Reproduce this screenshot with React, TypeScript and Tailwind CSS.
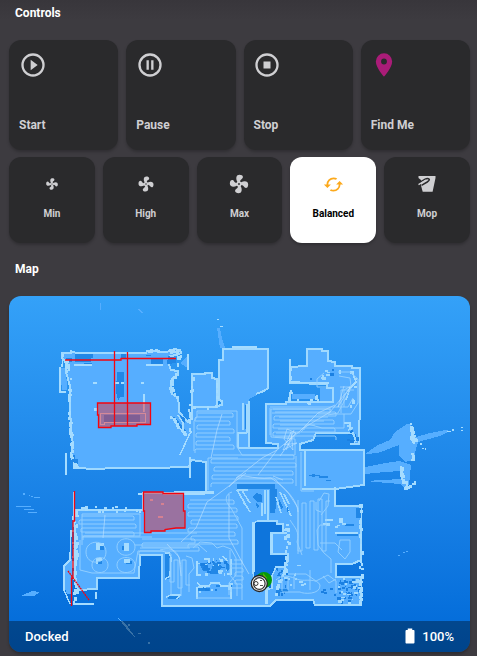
import React from "react";

type Pt = [number, number];

const ICONS = {
  play: "M12,20C7.59,20 4,16.41 4,12C4,7.59 7.59,4 12,4C16.41,4 20,7.59 20,12C20,16.41 16.41,20 12,20M12,2A10,10 0 0,0 2,12A10,10 0 0,0 12,22A10,10 0 0,0 22,12A10,10 0 0,0 12,2M10,16.5L16,12L10,7.5V16.5Z",
  pause: "M13,16V8H15V16H13M9,16V8H11V16H9M12,2A10,10 0 0,1 22,12A10,10 0 0,1 12,22A10,10 0 0,1 2,12A10,10 0 0,1 12,2M12,4A8,8 0 0,0 4,12A8,8 0 0,0 12,20A8,8 0 0,0 20,12A8,8 0 0,0 12,4Z",
  stop: "M12,2A10,10 0 0,0 2,12A10,10 0 0,0 12,22A10,10 0 0,0 22,12A10,10 0 0,0 12,2M12,4C16.41,4 20,7.59 20,12C20,16.41 16.41,20 12,20C7.59,20 4,16.41 4,12C4,7.59 7.59,4 12,4M9,9V15H15V9",
  marker: "M12,11.5A2.5,2.5 0 0,1 9.5,9A2.5,2.5 0 0,1 12,6.5A2.5,2.5 0 0,1 14.5,9A2.5,2.5 0 0,1 12,11.5M12,2A7,7 0 0,0 5,9C5,14.25 12,22 12,22C12,22 19,14.25 19,9A7,7 0 0,0 12,2Z",
  fan: "M12,11A1,1 0 0,0 11,12A1,1 0 0,0 12,13A1,1 0 0,0 13,12A1,1 0 0,0 12,11M12.5,2C17,2 17.11,5.57 14.75,6.75C13.76,7.24 13.32,8.29 13.13,9.22C13.61,9.42 14.03,9.73 14.35,10.13C18.05,8.13 22.03,8.92 22.03,12.5C22.03,17 18.46,17.1 17.28,14.73C16.78,13.74 15.72,13.3 14.79,13.11C14.59,13.59 14.28,14 13.88,14.34C15.87,18.03 15.08,22 11.5,22C7,22 6.91,18.42 9.27,17.24C10.25,16.75 10.69,15.71 10.89,14.79C10.4,14.59 9.97,14.27 9.65,13.87C5.96,15.85 2,15.07 2,11.5C2,7 5.56,6.89 6.74,9.26C7.24,10.25 8.29,10.68 9.22,10.87C9.41,10.39 9.73,9.97 10.14,9.65C8.15,5.96 8.94,2 12.5,2Z",
  cached: "M19,8L15,12H18A6,6 0 0,1 12,18C11,18 10.03,17.75 9.2,17.3L7.74,18.76C8.97,19.54 10.43,20 12,20A8,8 0 0,0 20,12H23M6,12A6,6 0 0,1 12,6C13,6 13.97,6.25 14.8,6.7L16.26,5.24C15.03,4.46 13.57,4 12,4A8,8 0 0,0 4,12H1L5,16L9,12",
  battery: "M16.67,4H15V2H9V4H7.33A1.33,1.33 0 0,0 6,5.33V20.67C6,21.4 6.6,22 7.33,22H16.67A1.33,1.33 0 0,0 18,20.67V5.33C18,4.6 17.4,4 16.67,4Z",
};

function Icon({ name, size, className = "" }: { name: keyof typeof ICONS; size: number; className?: string }) {
  return (
    <svg width={size} height={size} viewBox="0 0 24 24" fill="currentColor" className={`shrink-0 ${className}`}>
      <path d={ICONS[name]} />
    </svg>
  );
}

function MopIcon() {
  return (
    <svg width="20" height="20" viewBox="0 0 20 20" className="shrink-0">
      <path d="M1.500 2H18.500V4L15.600 17.700H5.700L4 11.600V6L1.500 4Z" fill="currentColor" />
      <path d="M1 9.400L8.200 5.100C9.400 4.400 11.200 4.200 12.200 5.200C12.700 6.200 11.300 7.300 10.200 8L4.500 11.300" fill="none" stroke="#2a2a2c" strokeWidth="1.5" />
      <path d="M1.500 10.600L9 6.100" fill="none" stroke="currentColor" strokeWidth="1.3" />
    </svg>
  );
}

/* Deterministic noise for the lidar speckle */
function noise(seed: number) {
  let s = seed * 7919;
  return () => {
    s = (s * 16807) % 2147483647;
    return s / 2147483647;
  };
}

/* Blocky dabs scattered along a wall */
function along(points: Pt[], seed: number, density: number, spread: number) {
  const r = noise(seed);
  let d = "";
  for (let i = 1; i < points.length; i++) {
    const [x0, y0] = points[i - 1];
    const [x1, y1] = points[i];
    const n = Math.ceil(Math.hypot(x1 - x0, y1 - y0) * density);
    for (let k = 0; k < n; k++) {
      const t = r();
      const x = Math.round(x0 + (x1 - x0) * t + (r() - 0.5) * spread) - 1;
      const y = Math.round(y0 + (y1 - y0) * t + (r() - 0.5) * spread) - 1;
      d += `M${x} ${y}h${2 + Math.round(r())}v${2 + Math.round(r() * 2)}H${x}z`;
    }
  }
  return d;
}

/* Speckle inside a rectangle */
function speckle(x: number, y: number, w: number, h: number, n: number, seed: number) {
  const r = noise(seed);
  let d = "";
  for (let i = 0; i < n; i++) {
    const px = Math.round(x + r() * w);
    const py = Math.round(y + r() * h);
    d += `M${px} ${py}h${1 + Math.round(r() * 3)}v${1 + Math.round(r() * 2)}H${px}z`;
  }
  return d;
}

/* Back-and-forth cleaning track */
function snake(x0: number, x1: number, y: number, rows: number, step: number, seed: number) {
  const r = noise(seed);
  let d = `M${x0} ${y}`;
  for (let i = 0; i < rows; i++) {
    const even = i % 2 === 0;
    d += `H${(even ? x1 : x0) + Math.round((r() - 0.5) * 5)}l${even ? 1 : -1} 1v${step - 1}`;
  }
  return d;
}

function snakeV(x: number, y0: number, y1: number, cols: number, step: number, seed: number) {
  const r = noise(seed);
  let d = `M${x} ${y0}`;
  for (let i = 0; i < cols; i++) {
    d += `V${(i % 2 === 0 ? y1 : y0) + Math.round((r() - 0.5) * 6)}h${step}`;
  }
  return d;
}

const poly = (p: Pt[]) => "M" + p.map((q) => q.join(" ")).join("L") + "Z";

const HOUSE: Pt[] = [
  [62, 353], [71, 353], [71, 351], [76, 353], [146, 353], [147, 351], [167, 352], [174, 349], [180, 350], [181, 353], [177, 355], [170, 356],
  [168, 362], [171, 370], [178, 371], [178, 375], [173, 378], [173, 383], [170, 388], [172, 394], [177, 397], [179, 404], [179, 412], [188, 422],
  [192, 418], [192, 374], [205, 374], [205, 373], [212, 373], [212, 378], [217, 379], [217, 406], [222, 405], [222, 401], [219, 400], [219, 360], [223, 360], [223, 349],
  [268, 349], [268, 388], [264, 391], [256, 394], [248, 398], [249, 405], [249, 448], [278, 448], [278, 444], [266, 443],
  [266, 404], [286, 404], [286, 402], [333, 402], [333, 388], [327, 388], [327, 384], [290, 383], [290, 367], [307, 366], [307, 349],
  [322, 349], [322, 351], [328, 351], [328, 361], [335, 362], [335, 366], [352, 366], [352, 368], [360, 368], [360, 396], [359, 444], [350, 444], [356, 441], [353, 433], [333, 433],
  [316, 433], [313, 440], [300, 444], [300, 450], [364, 450], [364, 485], [335, 489], [335, 506], [361, 506], [361, 560], [352, 564], [336, 564], [336, 577],
  [361, 577], [361, 605], [315, 605], [313, 600], [276, 600], [270, 606], [162, 606], [162, 555], [140, 555], [139, 578], [97, 578],
  [97, 589], [78, 590], [75, 575], [75, 541], [74, 510], [143, 510], [143, 493], [206, 492], [206, 462], [191, 460], [189, 467],
  [151, 468], [120, 468], [90, 469], [75, 467], [71, 455], [73, 445], [71, 430], [70, 405], [70, 386], [66, 372], [66, 362], [62, 358],
];

const NOTCH: Pt[] = [
  [253, 523], [258, 521], [277, 521], [277, 524], [283, 524], [283, 532], [287, 533], [271, 533], [271, 554], [288, 554], [288, 561], [284, 567],
  [276, 567], [272, 576], [272, 588], [266, 590], [266, 600], [268, 588], [256, 590], [253, 572],
];

const TRACKS = [
  snake(198, 231, 413, 10, 4, 11),
  snake(275, 334, 412, 7, 4, 27),
  snake(213, 293, 455, 8, 4, 39),
  snake(82, 135, 516, 6, 4, 51),
  snake(190, 235, 500, 12, 4, 67),
  snake(142, 196, 539, 4, 4, 83),
  snakeV(298, 500, 550, 8, 4, 91),
  snakeV(170, 558, 585, 5, 4, 97),
  snake(234, 243, 560, 8, 4, 99),
  "M194 451V421l3-4v-6h40v36l5 8h53v-16l-24-2v-28h60",
  "M208 490V458M208 458H238M296 486V456M301 452V491H314M325 525h-5l-3 5 1 15 6 8 7 6v14",
  "M82 545v-31h58v22H82M86 552c0-13 20-13 20 0s-20 14-20 0M117 547c0-11 18-11 18 0s-18 11-18 0M92 565c0-10 16-10 16 0s-16 10-16 0M117 565c0-10 18-10 18 0s-18 10-18 0",
  "M80 540v30l12 3h42l4-22h24l9 3v42M82 537h70M135 545h64l8 7M140 548h50M85 533h112M160 550c18-5 21 8 21 22v24",
  "M193 548l7-6 12 1 5 5 6-2 8 3 5 9v17l-7 8v12M186 556l6 2 2 10-5 6v18M230 550v25l7 9v12M196 598h35",
  "M232 492c-7 2-8 9-1 16l11 20v72M238 478h36l15 16 9 14v46M290 520c5 8 10 12 7 22l5 13M288 574h18l10 7 12-6 8 6v12",
  "M276 580c8-8 19-1 24 0s17-2 20 5c1 10-17 9-20 7h-18M282 575v16M288 576v14M294 576v13M310 570v20",
  "M319 501l5-8 5 1-1 12-7 9M316 502v8l5 2M340 540h10v12l-5 7-7-7zM320 543h15l7 7M323 576l6 7 7-4",
  "M338 372h12l8 7v24l-7 11H318M339 376l11 2 1 8-7 4v17M354 390h-13v23M270 407h78l5-9M270 435v-27M324 373l-7 6v8h9M351 388l-13 25-10 2",
  "M273 409h57v4h-58M344 414v14h-22l-14-4-7 8M279 417h49M280 421h44M280 425h35M278 429h27M276 433h24M275 437h20",
];

const DEBRIS = [
  "M365 454L378 445L390 440L395 432L407 424H411V437L416 437L430 433L446 430L450 431L440 436L418 442L413 460L405 462L399 456V445L378 453L366 454Z",
  "M365 467L385 463L399 461L411 465L409 485L404 488L400 484L365 481L401 479V471L385 472L365 474Z",
  "M217 328h3L222 338L225 348H220ZM180 363L189 354V369ZM21 596L32 591L40 592L34 596H23ZM290 367H305V382H290ZM292 394H315V399H292ZM320 388H332V402H320Z",
  "M60 368H66L67 390H62ZM65 564L72 559V594H67L63 582ZM100 303h1v7h-1zM138 309h2l3 4h-2zM16 506h15v1H16zM24 509h10v1H24zM28 512h9v1h-9zM23 493h2v2h-2zM28 495l7 2h5v1h-5z",
  "M118 618L130 633L140 641L135 637L126 624ZM138 633h3v1h-3zM148 642h2v2h-2zM128 624h2v2h-2zM398 555h2v1h-2zM403 552h2v1h-2zM406 551h2v1h-2z",
];

const DARK = [
  "M66 358h6v4h-6zM75 354h18v4h-2v4H75zM84 366h8v-3h-8zM117 372h7v25h-4l-2 4-2-11zM116 390h8v4h-8zM104 415h36v7h-36z",
  "M151 359h12v5h-12zM168 356l8 2v5l-9 1zM121 354h5v4h-5zM146 355h5v1h-5zM72 455v10h6v-6h-3v-4z",
  "M173 417l3 1 10 13 1 4h-3zM180 415l5 3v5l-3-2zM237 484h38v5h-38zM270 489h7v10l-2 14h-5zM245 405h3v24h-3z",
  "M199 563h8l2 8h-6zM214 562l8 4-4 8h-8zM225 561l6 6-4 4zM198 588h12v3h-12zM216 585h16v2h-16zM200 586h4v5h-4z",
  "M309 475h11v1h8v2h-9v-2h-10zM326 480h5v1h-5zM337 534h21v2h-21zM165 553h5v26h-5zM168 596h11v3h-11zM312 474h3v3h-3z",
  "M98 546h6v4h-6zM122 546h6v4h-6zM97 561h5v3h-5zM126 561h6v3h-6zM345 524h9v2h-9zM356 508h5v10h-5zM276 589h12v3h-8v4h-4z",
];

const WALLS: { p: Pt[]; s: number; d: number; w: number }[] = [
  { p: [[64, 355], [67, 366], [70, 382], [70, 408], [72, 440], [72, 462], [79, 469]], s: 7, d: 0.4, w: 3 },
  { p: [[146, 352], [180, 350], [178, 370], [172, 378], [173, 395], [178, 397]], s: 13, d: 0.3, w: 3 },
  { p: [[171, 416], [184, 433], [187, 433]], s: 32, d: 0.4, w: 3 },
  { p: [[193, 374], [192, 406], [217, 406], [217, 378]], s: 41, d: 0.12, w: 3 },
  { p: [[191, 400], [190, 432]], s: 44, d: 0.3, w: 3 },
  { p: [[75, 510], [75, 603]], s: 55, d: 0.55, w: 4 },
  { p: [[76, 509], [142, 509]], s: 58, d: 0.25, w: 4 },
  { p: [[361, 503], [361, 604]], s: 63, d: 0.3, w: 3 },
  { p: [[337, 370], [356, 374], [354, 390], [351, 408]], s: 68, d: 0.12, w: 3 },
  { p: [[290, 369], [290, 401], [316, 402], [320, 388]], s: 69, d: 0.14, w: 3 },
  { p: [[286, 524], [288, 550], [286, 568], [276, 593]], s: 77, d: 0.35, w: 4 },
  { p: [[411, 423], [413, 440], [417, 440]], s: 83, d: 1.2, w: 3 },
  { p: [[413, 453], [413, 461]], s: 87, d: 1, w: 2 },
  { p: [[402, 463], [402, 475], [406, 487], [415, 482]], s: 89, d: 0.8, w: 3 },
];

function FloorMap() {
  return (
    <svg viewBox="9 296 461 356" className="absolute inset-0 h-full w-full" shapeRendering="crispEdges" fill="none">
      <path d={DEBRIS.join("")} fill="#56aeff" />
      <path d={poly(HOUSE)} fill="#56aeff" stroke="#9fd9ff" strokeWidth="2" />
      <path d="M256 394L248 398L246 403" stroke="#56aeff" strokeWidth="3" />
      <path d={DARK.join("")} fill="#2187e6" />
      <path d={poly(NOTCH)} fill="#0e75dc" stroke="#9fd9ff" strokeWidth="1.5" />
      <path d="M237 490L250 512M241 489L250 503M237 490H248M265 490V514M268 490V522M276 497L281 513M280 492L291 516M284 494L289 504M262 503V516M244 503L247 507" stroke="#9fd9ff" strokeWidth="1.6" />
      <path d="M252 497l5-4 5 2v7h-4l-3-2zM256 503l4 3-3 2zM279 499l4 8-1 3-3-6zM287 505l2 6-2 1z" fill="#2187e6" />
      <path d="M243 403V430M238 448V433H247M238 448H278M247 404V433M192 407H218M305 451V486M302 489H335M333 387V402H322M300 444V449" stroke="#9fd9ff" strokeWidth="2" />
      <path d="M253 523V572M271 534V553M266 588V604M200 492H214" stroke="#a5dcff" strokeWidth="3" />

      <path
        d={speckle(198, 560, 32, 12, 16, 302) + speckle(337, 578, 22, 23, 40, 303) + speckle(276, 566, 10, 28, 16, 304) + speckle(309, 366, 24, 12, 4, 306) + speckle(347, 425, 10, 16, 9, 307) + speckle(320, 587, 14, 8, 5, 308) + speckle(198, 586, 33, 4, 6, 310)}
        fill="#1b80e2"
      />
      <path
        d={speckle(197, 557, 34, 18, 14, 401) + speckle(337, 577, 23, 25, 24, 402) + speckle(325, 516, 24, 12, 5, 404) + speckle(197, 583, 34, 8, 8, 405) + speckle(278, 564, 26, 20, 13, 407) + speckle(320, 366, 16, 13, 6, 408) + speckle(344, 422, 12, 8, 5, 409)}
        fill="#9fd9ff"
      />
      <path d={WALLS.map((w) => along(w.p, w.s, w.d, w.w)).join("")} fill="#a5dcff" />
      <path
        d="M60 367V392H66M62 367L63 354M66 453V475M188 354V370M290 359V382L329 383M290 392V402M144 394v18M74 365h18M146 365h17M232 347h24v2M74 492V520M71 530L70 560L64 566V590L70 604M75 604H94M96 592V599M138 494H143M163 494H205M335 487V506M335 533H358M197 561v14h4M231 559v15h-4M197 587v12M231 587v12M197 583l4 3h8l2-3h8l2 3h10M204 559h5v4M223 556l4 5M165 553h4l2 5-1 18-5 3M166 597l5-2h9l-3 4M352 372l4 10-6 6-4 12M344 423h6v6M171 416l13 18h3M178 415l5 8v8M190 433l-10 22M190 457V478"
        stroke="#a5dcff"
        strokeWidth="1.5"
      />
      <path d="M93 382h4v2h-4zM115 382h4v2h-4zM121 382h3v2h-3zM141 382h3v2h-3zM94 408h3v3h-3zM96 543h8v3h-4v4h-4zM124 543h5v8h-5zM96 558h6v3h-4v3h-2zM124 559h6v4h-6zM325 519h8v2h-8zM339 518h4v5h-4zM323 523h5v2h-5zM73 462l8 7h-8zM420 443h2v2h-2zM447 431h4v1h-4zM452 429h2v2h-2zM461 427h2v1h-2zM461 430h2v1h-2zM422 448h2v1h-2zM425 448h1v2h-1zM217 319h2v1h-2zM220 326h3v1h-3z" fill="#a5dcff" />

      <g shapeRendering="auto" strokeLinejoin="round">
        <path d={TRACKS.join("")} stroke="#94d0ff" strokeWidth=".95" />
        <path
          d="M335 405L318 413L300 431L277 450L258 475M294 430L288 445L280 456M292 438L286 450M350 388L330 412L302 429M222 414L217 430L211 458M236 478C240 472 252 480 271 478C286 488 297 500 298 512M181 542L196 528L207 502L225 489L246 473M229 494V538L242 562L249 574M167 544L179 557L181 576M105 515L103 538M273 476L283 480M229 487L238 477L262 458L277 450"
          stroke="#b9dfff"
          strokeWidth=".9"
          opacity=".75"
        />
        <path d="M287 429l9 4-12 12 13-2-14 7 8-18 2 18-9-11zM340 387h10l-12 20 6-21" stroke="#c8e7ff" strokeWidth=".7" opacity=".8" />
      </g>

      <path d="M97 403H151V424H137V426H111V427H98V415H97Z" fill="#dd3541" fillOpacity=".5" />
      <path d="M100 413H145V422H104V424H100ZM143 403V412" stroke="#d58998" strokeWidth="1" />
      <path d="M143 492H163V493H184V511H185V528H176L165 530V531H151V532H145V511H143Z" fill="#dd3541" fillOpacity=".5" />
      <path d="M150 499h3v2h-3zM161 503h3v2h-3zM158 516h5v2h-5z" fill="#d58091" />
      <g stroke="#f4050f" strokeWidth="1.3" shapeRendering="auto">
        <path d="M97.500 403H150.500V424.500H137V426H111V427.500H98.500V415H97.500Z" />
        <path d="M143.500 492H163V493.500H183.500V511H185V528H176L165 529.500V531H151V532.500H144.500V511H143.500Z" />
        <path d="M65 360H121V358.500H176M114.500 351V426M127.500 352V426M74.500 491V521H73V578H71.500V606" />
        <path d="M68 571L89 600" strokeDasharray="2 .6" />
      </g>

      <g shapeRendering="auto">
        <circle cx="264" cy="580" r="8" fill="#06990b" />
        <path d="M263 573l4 5-3 3" fill="#64b900" />
        <circle cx="259.300" cy="583.500" r="8" fill="#eeeeee" stroke="#252525" strokeWidth="1.3" />
        <circle cx="259.300" cy="583.500" r="5.800" fill="#ffffff" stroke="#333333" strokeWidth="1.2" />
        <circle cx="256" cy="583.500" r="2" stroke="#3a3a3a" strokeWidth="1" />
        <path d="M260 580.500h2M260 585.500h3M256 579h1" stroke="#555555" strokeWidth="1" />
      </g>
    </svg>
  );
}

function ControlCard({ label, icon, className = "" }: { label: string; icon: "play" | "pause" | "stop" | "marker"; className?: string }) {
  return (
    <button className="flex h-[110px] flex-col items-start justify-between rounded-xl bg-[#2a2a2c] pt-[10.500px] pr-2.5 pb-[17px] pl-[9.500px] text-[#cfcfd2] shadow-[0_2px_3px_rgba(0,0,0,0.22)]">
      <Icon name={icon} size={28} className={className} />
      <span className="pl-[0.5px] text-[12px] leading-4 font-bold">{label}</span>
    </button>
  );
}

function ModeCard({ label, active = false, children }: { label: string; active?: boolean; children: React.ReactNode }) {
  return (
    <button
      className={`flex h-[86px] flex-col items-center rounded-xl pt-[15px] shadow-[0_2px_3px_rgba(0,0,0,0.22)] ${
        active ? "bg-white text-black" : "bg-[#2a2a2c] text-[#cfcfd2]"
      }`}
    >
      <span className="flex h-6 items-center justify-center">{children}</span>
      <span className="mt-3 text-[10px] leading-3 font-bold">{label}</span>
    </button>
  );
}

export default function App() {
  return (
    <main className="h-[656px] w-[477px] overflow-hidden bg-[#3d3b40] bg-linear-to-b from-[#38363b] to-[#3d3b40] to-[20px] pr-[7px] pl-[9px] font-['Roboto',sans-serif]">
      <h2 className="h-10 pt-[5px] pl-1.5 text-[12px] leading-4 font-bold text-white">Controls</h2>
      <section className="grid grid-cols-4 gap-2">
        <ControlCard label="Start" icon="play" />
        <ControlCard label="Pause" icon="pause" />
        <ControlCard label="Stop" icon="stop" />
        <ControlCard label="Find Me" icon="marker" className="text-[#aa1c78]" />
      </section>
      <section className="mt-[7px] grid grid-cols-5 gap-2">
        <ModeCard label="Min"><Icon name="fan" size={14} /></ModeCard>
        <ModeCard label="High"><Icon name="fan" size={18} /></ModeCard>
        <ModeCard label="Max"><Icon name="fan" size={22} /></ModeCard>
        <ModeCard label="Balanced" active><Icon name="cached" size={21} className="text-[#fca91c]" /></ModeCard>
        <ModeCard label="Mop"><MopIcon /></ModeCard>
      </section>
      <h2 className="h-[53px] pt-[18px] pl-1.5 text-[12px] leading-4 font-bold text-white">Map</h2>
      <section className="relative flex h-[356px] flex-col justify-end overflow-hidden rounded-xl bg-linear-to-b from-[#34a1f8] to-[#0069d8] shadow-[0_2px_3px_rgba(0,0,0,0.25)]">
        <FloorMap />
        <footer className="relative flex h-[31px] items-center justify-between bg-black/35 pr-4 pl-4 text-[13px] font-medium text-white">
          <span>Docked</span>
          <span className="flex items-center gap-[3px]">
            <Icon name="battery" size={18} className="mb-0.5" />
            100%
          </span>
        </footer>
      </section>
    </main>
  );
}
